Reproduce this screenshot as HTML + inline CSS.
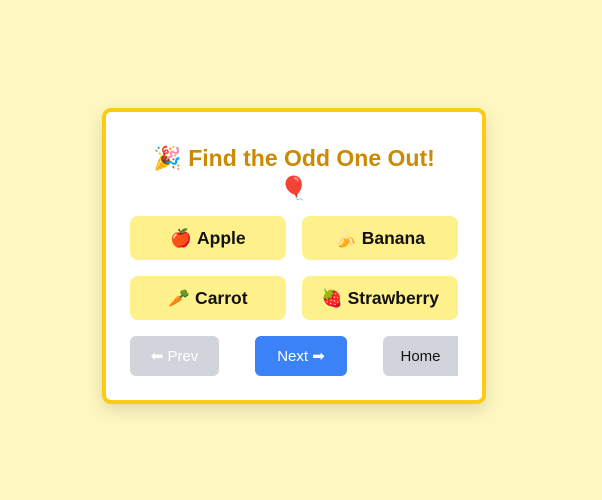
<!DOCTYPE html>
<html><head><meta charset="utf-8"><style>
html,body{margin:0;padding:0;width:602px;height:500px;background:#fef7c0;font-family:"Liberation Sans","DejaVu Sans",sans-serif;overflow:hidden}
.card{position:absolute;left:102px;top:108px;width:376px;height:288px;border:4px solid #facc15;border-radius:9px;background:#fff;box-shadow:0 6px 16px rgba(0,0,0,0.12);overflow:hidden}
.title{position:absolute;left:0;right:0;top:31px;text-align:center;color:#ca8a04;font-weight:bold;font-size:23px;line-height:30px}
.opt{position:absolute;width:156px;height:44px;background:#fef08a;border-radius:8px;display:flex;align-items:center;justify-content:center;font-weight:bold;font-size:17.5px;color:#111}
.nav{position:absolute;top:224px;height:40px;border-radius:6px;display:flex;align-items:center;justify-content:center;font-size:15px}
</style></head><body>
<div class="card">
<div class="title">🎉 Find the Odd One Out!<br>🎈</div>
<div class="opt" style="left:24px;top:104px">🍎&nbsp;Apple</div>
<div class="opt" style="left:196px;top:104px">🍌&nbsp;Banana</div>
<div class="opt" style="left:24px;top:164px">🥕&nbsp;Carrot</div>
<div class="opt" style="left:196px;top:164px">🍓&nbsp;Strawberry</div>
<div class="nav" style="left:24px;width:89px;background:#d1d5db;color:#fff">⬅ Prev</div>
<div class="nav" style="left:149px;width:92px;background:#3b82f6;color:#fff">Next ➡</div>
<div class="nav" style="left:277px;width:75px;background:#d1d5db;color:#111;border-radius:6px 0 0 6px">Home</div>
</div>
</body></html>
